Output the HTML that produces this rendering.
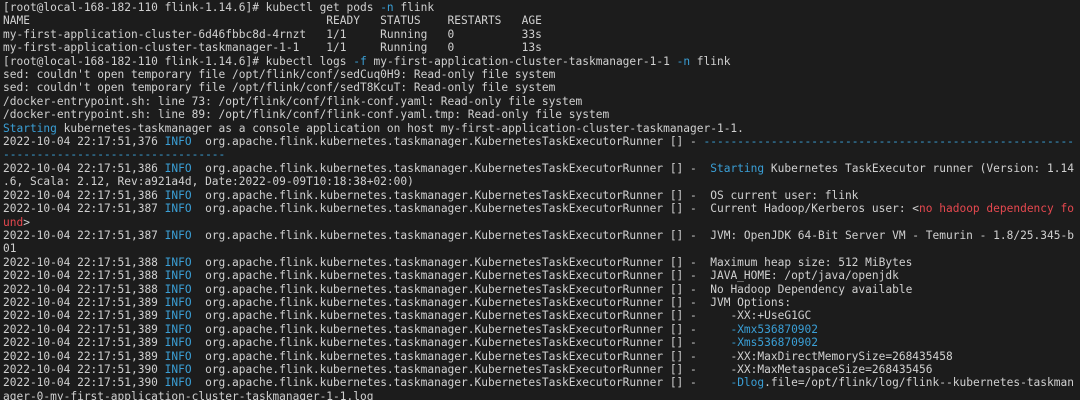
<!DOCTYPE html>
<html><head><meta charset="utf-8"><style>
html,body{margin:0;padding:0;background:#1c1c1c;width:1080px;height:400px;overflow:hidden}
pre{margin:0;padding:1px 0 0 3px;font-family:"DejaVu Sans Mono","Liberation Mono",monospace;font-size:11.2px;line-height:13.4px;color:#d0d0d0;white-space:pre}
.c{color:#3a9fd6}.r{color:#e5484f}
</style></head><body><pre>[root@local-168-182-110 flink-1.14.6]# kubectl get pods <span class="c">-n</span> flink
NAME                                            READY   STATUS    RESTARTS   AGE
my-first-application-cluster-6d46fbbc8d-4rnzt   1/1     Running   0          33s
my-first-application-cluster-taskmanager-1-1    1/1     Running   0          13s
[root@local-168-182-110 flink-1.14.6]# kubectl logs <span class="c">-f</span> my-first-application-cluster-taskmanager-1-1 <span class="c">-n</span> flink
sed: couldn't open temporary file /opt/flink/conf/sedCuq0H9: Read-only file system
sed: couldn't open temporary file /opt/flink/conf/sedT8KcuT: Read-only file system
/docker-entrypoint.sh: line 73: /opt/flink/conf/flink-conf.yaml: Read-only file system
/docker-entrypoint.sh: line 89: /opt/flink/conf/flink-conf.yaml.tmp: Read-only file system
<span class="c">Starting</span> kubernetes-taskmanager as a console application on host my-first-application-cluster-taskmanager-1-1.
2022-10-04 22:17:51,376 <span class="c">INFO</span>  org.apache.flink.kubernetes.taskmanager.KubernetesTaskExecutorRunner [] - <span class="c">-------------------------------------------------------</span>
<span class="c">---------------------------------</span>
2022-10-04 22:17:51,386 <span class="c">INFO</span>  org.apache.flink.kubernetes.taskmanager.KubernetesTaskExecutorRunner [] -  <span class="c">Starting</span> Kubernetes TaskExecutor runner (Version: 1.14
.6, Scala: 2.12, Rev:a921a4d, Date:2022-09-09T10:18:38+02:00)
2022-10-04 22:17:51,386 <span class="c">INFO</span>  org.apache.flink.kubernetes.taskmanager.KubernetesTaskExecutorRunner [] -  OS current user: flink
2022-10-04 22:17:51,387 <span class="c">INFO</span>  org.apache.flink.kubernetes.taskmanager.KubernetesTaskExecutorRunner [] -  Current Hadoop/Kerberos user: &lt;<span class="r">no hadoop dependency fo
und</span>&gt;
2022-10-04 22:17:51,387 <span class="c">INFO</span>  org.apache.flink.kubernetes.taskmanager.KubernetesTaskExecutorRunner [] -  JVM: OpenJDK 64-Bit Server VM - Temurin - 1.8/25.345-b
01
2022-10-04 22:17:51,388 <span class="c">INFO</span>  org.apache.flink.kubernetes.taskmanager.KubernetesTaskExecutorRunner [] -  Maximum heap size: 512 MiBytes
2022-10-04 22:17:51,388 <span class="c">INFO</span>  org.apache.flink.kubernetes.taskmanager.KubernetesTaskExecutorRunner [] -  JAVA_HOME: /opt/java/openjdk
2022-10-04 22:17:51,388 <span class="c">INFO</span>  org.apache.flink.kubernetes.taskmanager.KubernetesTaskExecutorRunner [] -  No Hadoop Dependency available
2022-10-04 22:17:51,389 <span class="c">INFO</span>  org.apache.flink.kubernetes.taskmanager.KubernetesTaskExecutorRunner [] -  JVM Options:
2022-10-04 22:17:51,389 <span class="c">INFO</span>  org.apache.flink.kubernetes.taskmanager.KubernetesTaskExecutorRunner [] -     -XX:+UseG1GC
2022-10-04 22:17:51,389 <span class="c">INFO</span>  org.apache.flink.kubernetes.taskmanager.KubernetesTaskExecutorRunner [] -     <span class="c">-Xmx536870902</span>
2022-10-04 22:17:51,389 <span class="c">INFO</span>  org.apache.flink.kubernetes.taskmanager.KubernetesTaskExecutorRunner [] -     <span class="c">-Xms536870902</span>
2022-10-04 22:17:51,389 <span class="c">INFO</span>  org.apache.flink.kubernetes.taskmanager.KubernetesTaskExecutorRunner [] -     -XX:MaxDirectMemorySize=268435458
2022-10-04 22:17:51,390 <span class="c">INFO</span>  org.apache.flink.kubernetes.taskmanager.KubernetesTaskExecutorRunner [] -     -XX:MaxMetaspaceSize=268435456
2022-10-04 22:17:51,390 <span class="c">INFO</span>  org.apache.flink.kubernetes.taskmanager.KubernetesTaskExecutorRunner [] -     <span class="c">-Dlog</span>.file=/opt/flink/log/flink--kubernetes-taskman
ager-0-my-first-application-cluster-taskmanager-1-1.log</pre></body></html>
